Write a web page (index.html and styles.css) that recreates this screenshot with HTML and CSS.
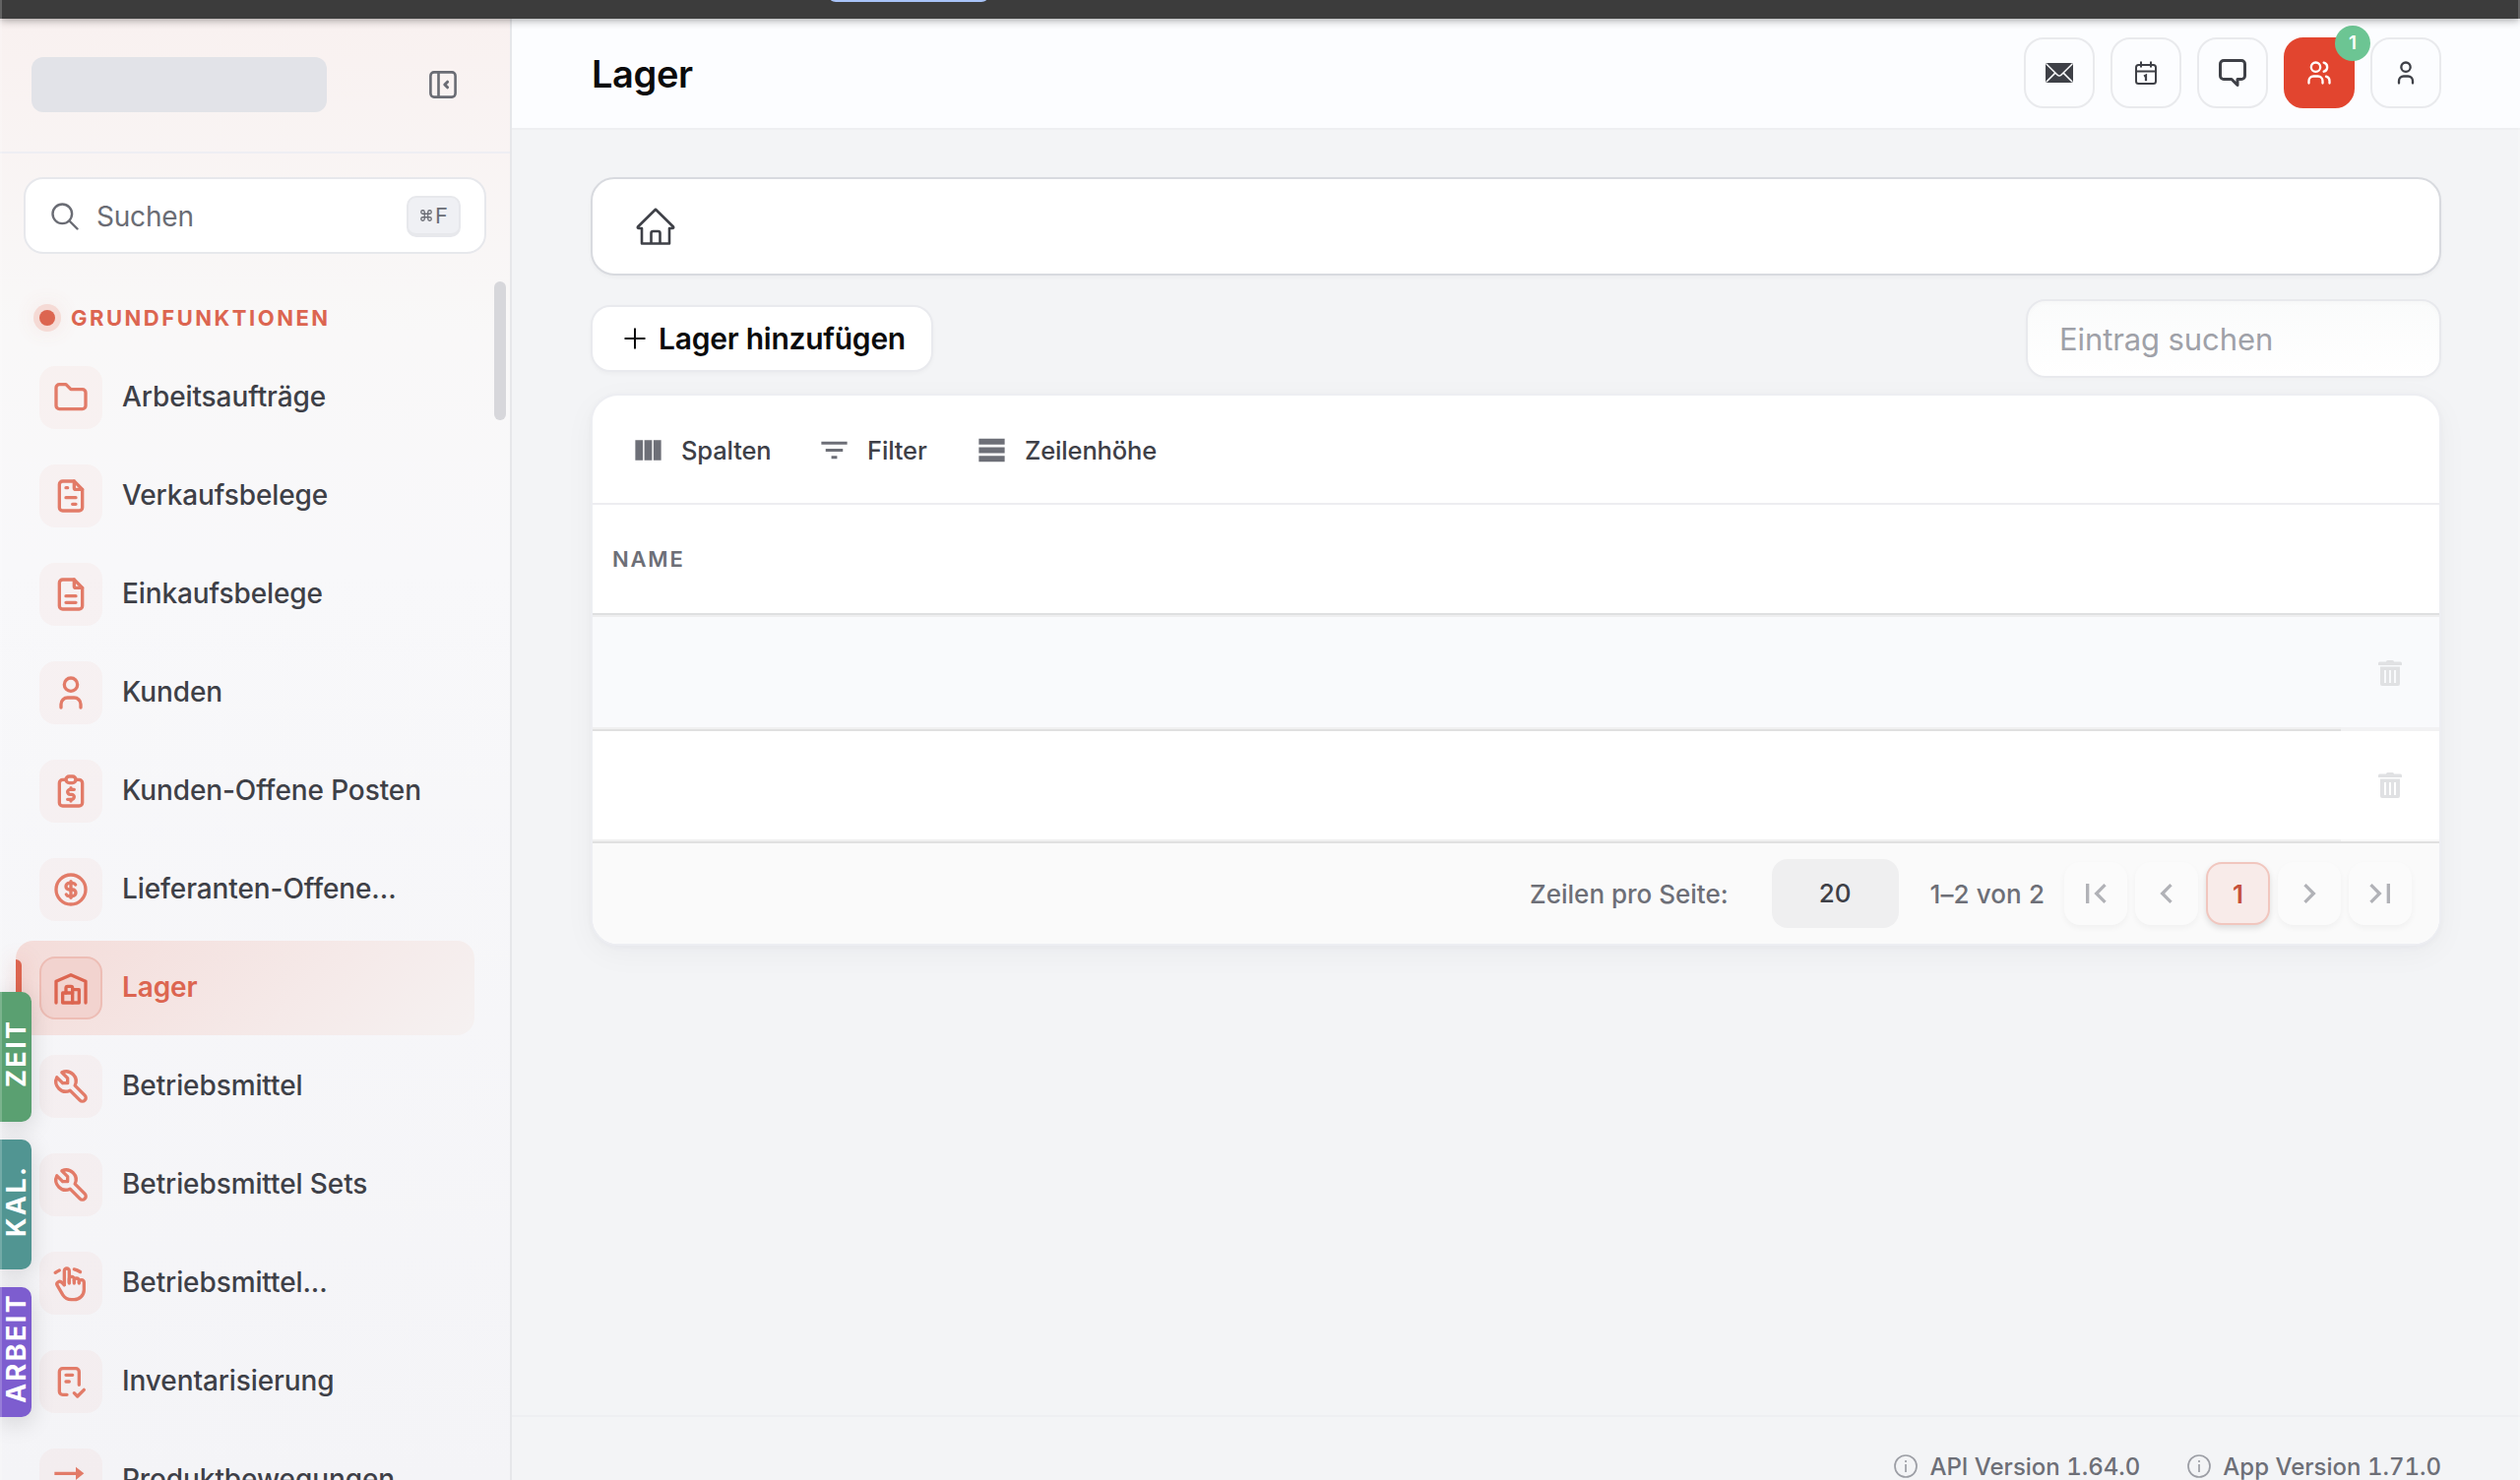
FILE: index.html
```html
<!DOCTYPE html>
<html lang="de">
<head>
    <meta charset="UTF-8">
    <meta name="viewport" content="width=device-width, initial-scale=1.0">
    <title>Lager</title>
    <link rel="stylesheet" href="styles.css">
</head>
<body>
    <div class="browser-bar"><div class="browser-tab"></div></div>
    <div class="app">
        <aside class="sidebar">
            <div class="sidebar-head">
                <div class="logo-placeholder"></div>
                <svg class="collapse-icon" viewBox="0 0 28 28" fill="none" stroke="currentColor" stroke-width="2.6">
                    <rect x="1.4" y="1.4" width="25.2" height="25.2" rx="3.5"/>
                    <path d="M9.5 1.5v25"/>
                    <path d="M18.6 11.2L15.8 14l2.8 2.8" stroke-width="3" stroke-linecap="round" stroke-linejoin="round"/>
                </svg>
            </div>
            <div class="search">
                <svg class="search-icon" viewBox="0 0 28 28" fill="none" stroke="currentColor" stroke-width="2.4" stroke-linecap="round">
                    <circle cx="11.3" cy="11.3" r="9.8"/>
                    <path d="M18.5 18.5l8 8"/>
                </svg>
                <span class="search-text">Suchen</span>
                <kbd class="key">
                    <svg class="cmd-icon" viewBox="0 0 24 24" fill="none" stroke="currentColor" stroke-width="2.2"><path d="M15 6v12a3 3 0 1 0 3-3H6a3 3 0 1 0 3 3V6a3 3 0 1 0-3 3h12a3 3 0 1 0-3-3"/></svg>F
                </kbd>
            </div>
            <div class="section-title"><span class="section-dot"></span>GRUNDFUNKTIONEN</div>
            <nav class="nav">
                <a class="nav-item">
                    <span class="nav-icon"><svg viewBox="0 0 24 24"><path d="M5 4h4l3 3h7a2 2 0 0 1 2 2v8a2 2 0 0 1-2 2H5a2 2 0 0 1-2-2V6a2 2 0 0 1 2-2"/></svg></span>
                    <span class="nav-label">Arbeitsaufträge</span>
                </a>
                <a class="nav-item">
                    <span class="nav-icon"><svg viewBox="0 0 24 24"><path d="M14 3v4a1 1 0 0 0 1 1h4"/><path d="M17 21H7a2 2 0 0 1-2-2V5a2 2 0 0 1 2-2h7l5 5v11a2 2 0 0 1-2 2z"/><path d="M9 7h1M9 13h6M13 17h2"/></svg></span>
                    <span class="nav-label">Verkaufsbelege</span>
                </a>
                <a class="nav-item">
                    <span class="nav-icon"><svg viewBox="0 0 24 24"><path d="M14 3v4a1 1 0 0 0 1 1h4"/><path d="M17 21H7a2 2 0 0 1-2-2V5a2 2 0 0 1 2-2h7l5 5v11a2 2 0 0 1-2 2z"/><path d="M9 13h6M9 17h6"/></svg></span>
                    <span class="nav-label">Einkaufsbelege</span>
                </a>
                <a class="nav-item">
                    <span class="nav-icon"><svg viewBox="0 0 24 24"><circle cx="12" cy="7" r="4"/><path d="M6 21v-2a4 4 0 0 1 4-4h4a4 4 0 0 1 4 4v2"/></svg></span>
                    <span class="nav-label">Kunden</span>
                </a>
                <a class="nav-item">
                    <span class="nav-icon"><svg viewBox="0 0 24 24"><path d="M9 5H7a2 2 0 0 0-2 2v12a2 2 0 0 0 2 2h10a2 2 0 0 0 2-2V7a2 2 0 0 0-2-2h-2"/><rect x="9" y="3" width="6" height="4" rx="2"/><path d="M14 11h-2.5a1.5 1.5 0 0 0 0 3h1a1.5 1.5 0 0 1 0 3H10"/><path d="M12 17v1m0-8v1"/></svg></span>
                    <span class="nav-label">Kunden-Offene Posten</span>
                </a>
                <a class="nav-item">
                    <span class="nav-icon"><svg viewBox="0 0 24 24"><circle cx="12" cy="12" r="9"/><path d="M14.8 9a2 2 0 0 0-1.8-1h-2a2 2 0 1 0 0 4h2a2 2 0 1 1 0 4h-2a2 2 0 0 1-1.8-1"/><path d="M12 7v10"/></svg></span>
                    <span class="nav-label">Lieferanten-Offene...</span>
                </a>
                <a class="nav-item active">
                    <span class="nav-icon"><svg viewBox="0 0 24 24"><path d="M3 21V8l9-4 9 4v13"/><path d="M13 13h4v8H7v-6h6"/><path d="M13 21v-9a1 1 0 0 0-1-1h-2a1 1 0 0 0-1 1v3"/></svg></span>
                    <span class="nav-label">Lager</span>
                </a>
                <a class="nav-item">
                    <span class="nav-icon"><svg viewBox="0 0 24 24"><path d="M7 10h3V7L6.500 3.500a6 6 0 0 1 8 8l6 6a2 2 0 0 1-3 3l-6-6a6 6 0 0 1-8-8L7 10"/></svg></span>
                    <span class="nav-label">Betriebsmittel</span>
                </a>
                <a class="nav-item">
                    <span class="nav-icon"><svg viewBox="0 0 24 24"><path d="M7 10h3V7L6.500 3.500a6 6 0 0 1 8 8l6 6a2 2 0 0 1-3 3l-6-6a6 6 0 0 1-8-8L7 10"/></svg></span>
                    <span class="nav-label">Betriebsmittel Sets</span>
                </a>
                <a class="nav-item">
                    <span class="nav-icon"><svg viewBox="0 0 24 24"><path d="M8 13V4.500a1.500 1.500 0 0 1 3 0V12"/><path d="M11 11.500v-2a1.500 1.500 0 0 1 3 0V12"/><path d="M14 10.500a1.500 1.500 0 0 1 3 0V12"/><path d="M17 11.500a1.500 1.500 0 0 1 3 0V16a6 6 0 0 1-6 6h-1.800a6 6 0 0 1-5-2.700L7 19c-.3-.5-1.400-2.400-3.300-5.700a1.500 1.500 0 0 1 .5-2 1.870 1.870 0 0 1 2.300.3L8 13"/><path d="M2.500 5.600A13.500 13.500 0 0 1 5 4.200M14 3.500c1.300.3 2.600.9 3.700 1.600"/></svg></span>
                    <span class="nav-label">Betriebsmittel...</span>
                </a>
                <a class="nav-item">
                    <span class="nav-icon"><svg viewBox="0 0 24 24"><path d="M9.600 20H7a2 2 0 0 1-2-2V6a2 2 0 0 1 2-2h8a2 2 0 0 1 2 2v8"/><path d="M14 19l2 2 4-4M9 8h4M9 12h2"/></svg></span>
                    <span class="nav-label">Inventarisierung</span>
                </a>
                <a class="nav-item">
                    <span class="nav-icon"><svg class="solid" viewBox="0 0 24 24"><path d="M15 12l5-4-5-4v3H2v2h13zM22 15H9v-3l-5 4 5 4v-3h13z"/></svg></span>
                    <span class="nav-label">Produktbewegungen</span>
                </a>
            </nav>
            <div class="scroll-thumb"></div>
        </aside>
        <main class="main">
            <header class="header">
                <h1 class="title">Lager</h1>
                <div class="actions">
                    <button class="action">
                        <svg width="28" height="20" viewBox="0 0 28 20"><rect width="28" height="20" rx="2" fill="currentColor"/><path d="M.8 1l11.400 11.200q1.800 1.800 3.600 0L27.200 1M1 19l8.600-8.600M27 19l-8.600-8.600" fill="none" stroke="#fcfdff" stroke-width="1.500"/></svg>
                    </button>
                    <button class="action">
                        <svg width="22" height="24" viewBox="0 0 22 24" fill="none" stroke="currentColor" stroke-width="2"><rect x="1" y="4" width="20" height="19" rx="2.500"/><path d="M1 10.500h20M6 .5v6M16 .5v6"/><path d="M9 15.500l2-1v5.800" stroke-width="2.200"/></svg>
                    </button>
                    <button class="action">
                        <svg width="30" height="30" viewBox="0 0 30 30" fill="none" stroke="currentColor" stroke-width="3" stroke-linejoin="round"><path d="M6 2.500h18a3.500 3.500 0 0 1 3.500 3.500v12a3.500 3.500 0 0 1-3.500 3.500h-4v6l-6-6H6A3.500 3.500 0 0 1 2.500 18V6A3.500 3.500 0 0 1 6 2.500z"/></svg>
                    </button>
                    <button class="action primary">
                        <svg width="28" height="28" viewBox="0 0 24 24" class="line"><circle cx="9" cy="7" r="4"/><path d="M3 21v-2a4 4 0 0 1 4-4h4a4 4 0 0 1 4 4v2M16 3.130a4 4 0 0 1 0 7.750M21 21v-2a4 4 0 0 0-3-3.850"/></svg>
                        <span class="badge">1</span>
                    </button>
                    <button class="action">
                        <svg width="28" height="28" viewBox="0 0 24 24" class="line"><circle cx="12" cy="7" r="4"/><path d="M6 21v-2a4 4 0 0 1 4-4h4a4 4 0 0 1 4 4v2"/></svg>
                    </button>
                </div>
            </header>
            <section class="content">
                <div class="breadcrumb">
                    <svg width="40" height="38" viewBox="0 0 40 38" fill="none" stroke="currentColor" stroke-width="2.600" stroke-linejoin="round"><path d="M20 1.800L2 19.500q-.6 1.500 1 1.500h3v15.500h28V21h3q1.600 0 1-1.500z"/><path d="M15.500 36V26q0-2 2-2h5q2 0 2 2v10"/></svg>
                </div>
                <div class="toolbar">
                    <button class="add-button">
                        <svg width="22" height="22" viewBox="0 0 22 22" stroke="currentColor" stroke-width="2"><path d="M11 .5v21M.5 11h21"/></svg>
                        <span>Lager hinzufügen</span>
                    </button>
                    <div class="table-search">Eintrag suchen</div>
                </div>
                <div class="table-card">
                    <div class="table-tools">
                        <div class="tool t1"><svg viewBox="0 0 24 24"><path d="M14.670 5v14H9.330V5zM15.670 19H21V5h-5.330zM8.330 19V5H3v14z"/></svg>Spalten</div>
                        <div class="tool t2"><svg viewBox="0 0 24 24"><path d="M10 18h4v-2h-4zM3 6v2h18V6zM6 13h12v-2H6z"/></svg>Filter</div>
                        <div class="tool t3"><svg viewBox="0 0 24 24"><path d="M3 4h18v4H3zM3 10h18v4H3zM3 16h18v4H3z"/></svg>Zeilenhöhe</div>
                    </div>
                    <div class="table-head">NAME</div>
                    <div class="row odd">
                        <div class="cell"></div>
                        <div class="cell-action"><svg class="trash" viewBox="0 0 24 26"><path d="M8 1.500Q8 0 9.500 0h5Q16 0 16 1.500h6.500Q24 1.500 24 3v2H0V3q0-1.500 1.500-1.500zM2 6.500h20V24q0 2-2 2H4q-2 0-2-2zM6 10v13h2V10zM11 10v13h2V10zM16 10v13h2V10z" fill-rule="evenodd"/></svg></div>
                    </div>
                    <div class="row last">
                        <div class="cell"></div>
                        <div class="cell-action"><svg class="trash" viewBox="0 0 24 26"><path d="M8 1.500Q8 0 9.500 0h5Q16 0 16 1.500h6.500Q24 1.500 24 3v2H0V3q0-1.500 1.500-1.500zM2 6.500h20V24q0 2-2 2H4q-2 0-2-2zM6 10v13h2V10zM11 10v13h2V10zM16 10v13h2V10z" fill-rule="evenodd"/></svg></div>
                    </div>
                    <div class="pagination">
                        <span class="per-page">Zeilen pro Seite:</span>
                        <span class="page-size">20</span>
                        <span class="range">1–2 von 2</span>
                        <div class="pages">
                            <button class="page"><svg viewBox="0 0 24 24"><path d="M18.410 16.590L13.820 12l4.590-4.590L17 6l-6 6 6 6zM6 6h2v12H6z"/></svg></button>
                            <button class="page"><svg viewBox="0 0 24 24"><path d="M15.410 7.410L14 6l-6 6 6 6 1.410-1.410L10.830 12z"/></svg></button>
                            <button class="page current">1</button>
                            <button class="page"><svg viewBox="0 0 24 24"><path d="M10 6L8.590 7.410 13.170 12l-4.580 4.590L10 18l6-6z"/></svg></button>
                            <button class="page"><svg viewBox="0 0 24 24"><path d="M5.590 7.410L10.180 12l-4.590 4.590L7 18l6-6-6-6zM16 6h2v12h-2z"/></svg></button>
                        </div>
                    </div>
                </div>
            </section>
            <footer class="footer">
                <div class="version"><svg viewBox="0 0 24 24"><circle cx="12" cy="12" r="11"/><path d="M12 10v8M12 6v2"/></svg><span>API Version 1.64.0</span></div>
                <div class="version"><svg viewBox="0 0 24 24"><circle cx="12" cy="12" r="11"/><path d="M12 10v8M12 6v2"/></svg><span>App Version 1.71.0</span></div>
            </footer>
        </main>
    </div>
    <div class="side-tabs">
        <div class="side-tab green">ZEIT</div>
        <div class="side-tab teal">KAL.</div>
        <div class="side-tab purple">ARBEIT</div>
    </div>
    <div class="window-edge"></div>
</body>
</html>
```
FILE: styles.css
```css
* {
    box-sizing: border-box;
}
body {
    margin: 0;
    height: 1504px;
    display: flex;
    flex-direction: column;
    overflow: hidden;
    font-family: Inter, "Liberation Sans", sans-serif;
    font-size: 28px;
    font-weight: 500;
    color: #3e4047;
    background: #f3f4f6;
}
button {
    font: inherit;
    margin: 0;
    padding: 0;
}
svg {
    display: block;
    flex: none;
}
.browser-bar {
    flex: none;
    height: 19px;
    background: #3c3c3c;
    box-shadow: 0 1px 10px rgba(0,0,0,0.4);
    position: relative;
    z-index: 5;
}
.browser-tab {
    width: 158px;
    height: 2px;
    margin-left: 844px;
    background: #a8c3f8;
    border-radius: 0 0 8px 8px / 0 0 2px 2px;
}
.app {
    flex: 1;
    min-height: 0;
    display: flex;
}

/* Sidebar */
.sidebar {
    position: relative;
    flex: none;
    width: 520px;
    overflow: hidden;
    border-right: 2px solid #e6e7ea;
    background: linear-gradient(180deg, #f9f1f0 0, #f9f8f8 320px, #f8f8fa 560px, #f4f4f7 100%);
}
.sidebar-head {
    height: 137px;
    padding: 0 54px 1px 32px;
    display: flex;
    align-items: center;
    justify-content: space-between;
    border-bottom: 2px solid #eeeef3;
}
.logo-placeholder {
    width: 300px;
    height: 56px;
    border-radius: 12px;
    background: #e2e3e8;
}
.collapse-icon {
    width: 28px;
    height: 28px;
    color: #6a6c74;
}
.search {
    height: 78px;
    margin: 24px 24px 0;
    padding: 1px 24px 0 26px;
    display: flex;
    align-items: center;
    border: 2px solid #e7e8ec;
    border-radius: 20px;
    background: #fff;
    color: #6a6c74;
}
.search-icon {
    width: 28px;
    height: 28px;
}
.search-text {
    flex: 1;
    margin-left: 18px;
    font-weight: 400;
    font-size: 28px;
    letter-spacing: -0.2px;
}
.key {
    width: 55px;
    height: 42px;
    display: flex;
    align-items: center;
    justify-content: center;
    gap: 2px;
    border: 2px solid #e7e8ec;
    border-bottom-width: 4px;
    border-radius: 10px;
    background: #eff0f4;
    font-family: inherit;
    font-size: 22px;
    font-weight: 400;
}
.cmd-icon {
    width: 14px;
    height: 14px;
}
.section-title {
    height: 97px;
    padding: 32px 0 0 40px;
    display: flex;
    align-items: center;
    font-size: 22px;
    font-weight: 700;
    letter-spacing: 2.5px;
    color: #dc6550;
}
.section-dot {
    width: 16px;
    height: 16px;
    margin-right: 16px;
    border-radius: 50%;
    background: #dc6550;
    box-shadow: 0 0 0 6px #f5dad5, 0 0 24px rgba(220,101,80,0.3);
}
.nav {
    margin-top: 1px;
    padding: 0 36px 0 16px;
    display: flex;
    flex-direction: column;
    gap: 4px;
}
.nav-item {
    position: relative;
    flex: none;
    height: 96px;
    padding-left: 24px;
    display: flex;
    align-items: center;
    border-radius: 18px;
}
.nav-icon {
    width: 64px;
    height: 64px;
    margin-right: 20px;
    display: flex;
    align-items: center;
    justify-content: center;
    border-radius: 16px;
    background: rgba(225,90,70,0.045);
    color: #e27b68;
}
.nav-icon svg {
    width: 40px;
    height: 40px;
    fill: none;
    stroke: currentColor;
    stroke-width: 2;
    stroke-linecap: round;
    stroke-linejoin: round;
}
.nav-icon svg.solid {
    fill: currentColor;
    stroke: none;
}
.nav-label {
    padding-bottom: 2px;
    letter-spacing: -0.1px;
}
.active {
    background: linear-gradient(135deg, #f4dcd9 0%, #f5e9e8 60%, #f5f1f1 100%);
    color: #dc6550;
    font-weight: 600;
}
.active::before {
    content: "";
    position: absolute;
    left: 0;
    top: 19px;
    width: 6px;
    height: 58px;
    border-radius: 0 6px 6px 0;
    background: #dc6550;
    box-shadow: 0 0 20px rgba(220,101,80,0.35);
}
.active .nav-icon {
    border: 2px solid #edbdb5;
    background: #f2d3cf;
    color: #dc6550;
}
.scroll-thumb {
    position: absolute;
    left: 502px;
    top: 267px;
    width: 12px;
    height: 141px;
    border-radius: 6px;
    background: #d7d7db;
}

/* Main area */
.main {
    flex: 1;
    min-width: 0;
    display: flex;
    flex-direction: column;
}
.header {
    flex: none;
    height: 113px;
    padding: 0 80px 2px;
    display: flex;
    align-items: center;
    justify-content: space-between;
    border-bottom: 2px solid #eeeff2;
    background: #fcfdff;
}
.title {
    margin: 0;
    padding: 2px 0 0 1px;
    font-size: 38px;
    font-weight: 600;
    letter-spacing: -0.4px;
    color: #0b0b0c;
}
.actions {
    display: flex;
    gap: 16px;
}
.action {
    position: relative;
    width: 72px;
    height: 72px;
    display: flex;
    align-items: center;
    justify-content: center;
    border: 2px solid #e9eaed;
    border-radius: 20px;
    background: #fcfdff;
    color: #3e4047;
}
.line {
    fill: none;
    stroke: currentColor;
    stroke-width: 2;
    stroke-linecap: round;
    stroke-linejoin: round;
}
.primary {
    border-color: #e2452f;
    background: #e2452f;
    color: #fff;
}
.badge {
    position: absolute;
    top: -14px;
    right: -18px;
    width: 36px;
    height: 36px;
    line-height: 36px;
    border-radius: 50%;
    background: #6cc593;
    color: #fff;
    font-size: 19px;
    font-weight: 600;
    text-align: center;
}
.content {
    flex: 1;
    padding: 48px 80px 0;
}
.breadcrumb {
    height: 100px;
    padding-left: 44px;
    display: flex;
    align-items: center;
    border: 2px solid #d8dadf;
    border-radius: 24px;
    background: #fff;
    box-shadow: 0 2px 4px rgba(0,0,0,0.03);
}
.toolbar {
    height: 80px;
    margin-top: 24px;
    display: flex;
    align-items: center;
    justify-content: space-between;
}
.add-button {
    width: 348px;
    height: 68px;
    padding-left: 32px;
    display: flex;
    align-items: center;
    gap: 13px;
    border: 2px solid #e9eaee;
    border-radius: 20px;
    background: #fff;
    box-shadow: 0 2px 4px rgba(0,0,0,0.03);
    font-size: 30px;
    font-weight: 600;
    letter-spacing: -0.25px;
    white-space: nowrap;
    color: #0b0b0c;
}
.table-search {
    width: 422px;
    height: 80px;
    padding-left: 32px;
    border: 2px solid #e8e9ed;
    border-radius: 20px;
    background: linear-gradient(180deg, #fafbfb, #fff);
    box-shadow: inset 0 2px 4px rgba(0,0,0,0.02), 0 2px 4px rgba(0,0,0,0.02);
    line-height: 78px;
    font-size: 31px;
    font-weight: 400;
    letter-spacing: -0.1px;
    color: #9fa1a8;
}
.table-card {
    height: 561px;
    margin-top: 16px;
    overflow: hidden;
    border: 2px solid #edeef2;
    border-radius: 28px;
    background: #fff;
    box-shadow: 0 8px 32px rgba(20,30,60,0.04), 0 2px 6px rgba(20,30,60,0.03);
}
.table-tools {
    height: 111px;
    padding: 1px 0 0 39px;
    display: flex;
    align-items: center;
    border-bottom: 2px solid #ededf1;
}
.tool {
    display: flex;
    align-items: center;
    font-size: 25.5px;
    letter-spacing: -0.15px;
}
.tool svg {
    width: 35px;
    height: 35px;
    margin-right: 16px;
    fill: #6d6f77;
}
.t1 {
    width: 189px;
}
.t2 {
    width: 160px;
}
.table-head {
    height: 112px;
    padding-left: 20px;
    line-height: 110px;
    border-bottom: 2px solid #dfe0e1;
    box-shadow: 0 2px 0 #eeeeef;
    position: relative;
    font-size: 22px;
    font-weight: 600;
    letter-spacing: 1.8px;
    color: #6d6f77;
}
.row {
    height: 118px;
    display: flex;
}
.row.last {
    height: 112px;
}
.odd {
    background: #f9fafc;
}
.odd .cell-action {
    padding-top: 4px;
}
.cell {
    flex: 1;
    border-bottom: 2px solid #e0e0e0;
    box-shadow: inset 0 -2px 0 #f0f0f0;
}
.cell-action {
    width: 100px;
    display: flex;
    align-items: center;
    justify-content: center;
    border-bottom: 4px solid #f2f2f3;
}
.last .cell {
    border-bottom: 0;
}
.last .cell-action {
    border-bottom-width: 2px;
    border-bottom-color: #f8f8f8;
}
.trash {
    width: 24px;
    height: 26px;
    fill: #e0e1e3;
}
.pagination {
    height: 104px;
    padding-right: 28px;
    display: flex;
    align-items: center;
    justify-content: flex-end;
    border-top: 2px solid #e0e0e0;
    background: #fafafa;
    font-size: 26px;
    color: #6d6f77;
}
.page-size {
    width: 129px;
    height: 70px;
    margin: 0 32px 0 44px;
    line-height: 70px;
    text-align: center;
    border-radius: 16px;
    background: #efeff0;
    color: #3e4047;
}
.range {
    letter-spacing: 0.1px;
}
.pages {
    margin-left: 20px;
    display: flex;
    gap: 8px;
}
.page {
    width: 64px;
    height: 64px;
    display: flex;
    align-items: center;
    justify-content: center;
    border: 0;
    border-radius: 16px;
    background: #fbfbfb;
    box-shadow: 0 3px 6px rgba(0,0,0,0.04);
}
.page svg {
    width: 40px;
    height: 40px;
    fill: #b1b2b7;
}
.current {
    width: 65px;
    border: 2px solid #f1c6be;
    background: #f8ebe9;
    box-shadow: 0 3px 6px rgba(0,0,0,0.12);
    font-weight: 600;
    color: #c5503b;
}
.footer {
    flex: none;
    height: 66px;
    padding: 38px 80px 0;
    display: flex;
    justify-content: flex-end;
    gap: 48px;
    overflow: hidden;
    border-top: 2px solid #eeeff2;
    font-size: 24px;
    line-height: 26px;
    font-variant-numeric: tabular-nums;
    color: #6d6f77;
}
.version {
    display: flex;
    gap: 12px;
}
.version svg {
    width: 24px;
    height: 24px;
    fill: none;
    stroke: #9c9ea5;
    stroke-width: 1.7;
}

/* Tabs docked to the left window edge */
.side-tabs {
    position: absolute;
    left: 0;
    top: 1008px;
    display: flex;
    flex-direction: column;
    gap: 18px;
}
.side-tab {
    width: 32px;
    height: 132px;
    padding-top: 8px;
    display: flex;
    align-items: center;
    justify-content: center;
    writing-mode: vertical-rl;
    transform: rotate(180deg);
    border-radius: 10px 0 0 10px;
    box-shadow: 0 -6px 24px rgba(0,0,0,0.14);
    color: #fff;
    font-size: 27px;
    font-weight: 700;
    letter-spacing: 2.4px;
}
.green {
    background: #5aa071;
}
.teal {
    background: #519592;
}
.purple {
    background: #7d5dcf;
}
.window-edge {
    position: absolute;
    inset: 0;
    z-index: 10;
    border: solid rgba(255,255,255,0.2);
    border-width: 0 2px;
    pointer-events: none;
}
```
